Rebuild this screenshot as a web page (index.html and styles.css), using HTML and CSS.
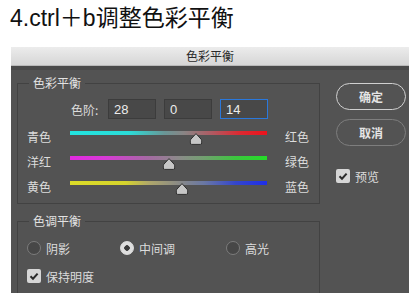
FILE: index.html
```html
<!DOCTYPE html>
<html lang="zh">
<head>
  <meta charset="UTF-8">
  <title>色彩平衡</title>
  <link rel="stylesheet" href="styles.css">
</head>
<body>
  <h1 class="heading">4.ctrl＋b调整色彩平衡</h1>

  <div class="dialog">
    <div class="titlebar">色彩平衡</div>
    <div class="dialog-body">
      <div class="main-col">
        <fieldset class="group">
          <legend>色彩平衡</legend>
          <div class="level-row">
            <span class="level-label">色阶:</span>
            <input class="num" type="text" value="28">
            <input class="num" type="text" value="0">
            <input class="num focused" type="text" value="14">
          </div>

          <div class="slider-row">
            <span class="side-left">青色</span>
            <div class="slider">
              <div class="track track-cr"></div>
              <svg class="thumb" style="left: 64%" width="13" height="12" viewBox="0 0 13 12"><path d="M6.5 0.6 L11.6 6.2 Q12.2 6.9 12.2 7.8 L12.2 10 Q12.2 11.4 10.8 11.4 L2.2 11.4 Q0.8 11.4 0.8 10 L0.8 7.8 Q0.8 6.9 1.4 6.2 Z"/></svg>
            </div>
            <span class="side-right">红色</span>
          </div>
          <div class="slider-row">
            <span class="side-left">洋红</span>
            <div class="slider">
              <div class="track track-mg"></div>
              <svg class="thumb" style="left: 50%" width="13" height="12" viewBox="0 0 13 12"><path d="M6.5 0.6 L11.6 6.2 Q12.2 6.9 12.2 7.8 L12.2 10 Q12.2 11.4 10.8 11.4 L2.2 11.4 Q0.8 11.4 0.8 10 L0.8 7.8 Q0.8 6.9 1.4 6.2 Z"/></svg>
            </div>
            <span class="side-right">绿色</span>
          </div>
          <div class="slider-row">
            <span class="side-left">黄色</span>
            <div class="slider">
              <div class="track track-yb"></div>
              <svg class="thumb" style="left: 57%" width="13" height="12" viewBox="0 0 13 12"><path d="M6.5 0.6 L11.6 6.2 Q12.2 6.9 12.2 7.8 L12.2 10 Q12.2 11.4 10.8 11.4 L2.2 11.4 Q0.8 11.4 0.8 10 L0.8 7.8 Q0.8 6.9 1.4 6.2 Z"/></svg>
            </div>
            <span class="side-right">蓝色</span>
          </div>
        </fieldset>

        <fieldset class="group tone">
          <legend>色调平衡</legend>
          <div class="radio-row">
            <label class="radio-item w1"><span class="radio"></span>阴影</label>
            <label class="radio-item w2"><span class="radio on"></span>中间调</label>
            <label class="radio-item"><span class="radio"></span>高光</label>
          </div>
          <label class="check-item">
            <span class="check"><svg width="14" height="14" viewBox="0 0 14 14"><path d="M3.5 7.2 L6 9.7 L10.6 4.6" fill="none" stroke="#2b2b2b" stroke-width="2"/></svg></span>保持明度
          </label>
        </fieldset>
      </div>

      <div class="side-col">
        <button class="btn primary">确定</button>
        <button class="btn">取消</button>
        <label class="check-item preview">
          <span class="check"><svg width="14" height="14" viewBox="0 0 14 14"><path d="M3.5 7.2 L6 9.7 L10.6 4.6" fill="none" stroke="#2b2b2b" stroke-width="2"/></svg></span>预览
        </label>
      </div>
    </div>
  </div>
</body>
</html>
```

FILE: styles.css
```css
body {
  margin: 0;
  background: #fff;
  font-family: "Liberation Sans", "Noto Sans CJK SC", sans-serif;
}
.heading {
  margin: 0;
  padding: 3px 0 0 10px;
  height: 44px;
  font-size: 23px;
  font-weight: normal;
  line-height: 30px;
  color: #111;
}
.dialog {
  margin-left: 11px;
  width: 398px;
  font-family: "Noto Sans CJK SC", sans-serif;
  font-size: 12px;
}
.titlebar {
  height: 18px;
  line-height: 18px;
  text-align: center;
  color: #2a2a2a;
  background: linear-gradient(#ececec, #d6d6d6);
  border-bottom: 1px solid #b9b9b9;
}
.dialog-body {
  display: flex;
  gap: 16px;
  background: #535353;
  border-top: 4px solid #4a4a4a;
  padding: 0 3px 20px 6px;
  color: #dcdcdc;
}
.main-col {
  width: 303px;
  padding-top: 5px;
}
.group {
  margin: 0;
  padding: 8px 0 0 9px;
  border: 1px solid #424242;
}
.group legend {
  margin-left: 2px;
  padding: 0 4px;
  line-height: 16px;
  color: #e2e2e2;
}
.tone {
  margin-top: 9px;
  padding-top: 10px;
}
.level-row {
  display: flex;
  align-items: center;
  gap: 8px;
  margin-left: 43px;
  height: 20px;
}
.level-label {
  width: 29px;
  padding-left: 1px;
}
.num {
  box-sizing: border-box;
  width: 48px;
  height: 20px;
  margin: 0;
  padding: 0 5px;
  background: #484848;
  border: 1px solid #3c3c3c;
  color: #ececec;
  font-family: "Liberation Sans", sans-serif;
  font-size: 13px;
  outline: none;
}
.num.focused {
  border-color: #2a78dc;
}
.slider-row {
  display: flex;
  align-items: flex-start;
  height: 25px;
}
.level-row + .slider-row {
  margin-top: 9px;
}
.side-left {
  width: 43px;
  margin-top: 2px;
  line-height: 14px;
}
.side-right {
  margin-left: 18px;
  margin-top: 2px;
  line-height: 14px;
}
.slider {
  position: relative;
  width: 197px;
  height: 25px;
}
.track {
  margin-top: 3px;
  height: 4px;
}
.track-cr {
  background: linear-gradient(to right, #22e4e0 0%, #2bdcd8 30%, #6a9696 48%, #8a8484 58%, #b05a62 72%, #dc2a32 86%, #ec121c 100%);
}
.track-mg {
  background: linear-gradient(to right, #e22ae0 0%, #d83ad6 18%, #a46aa2 40%, #8c8a8a 55%, #72a070 68%, #3cc63e 84%, #24dc28 100%);
}
.track-yb {
  background: linear-gradient(to right, #dcdc28 0%, #d6d42c 28%, #b0a86a 40%, #8a8a86 55%, #6a78a4 68%, #3446cc 84%, #1e2ee8 100%);
}
.thumb {
  position: absolute;
  top: 5px;
  transform: translateX(-50%);
  fill: #c6c6c6;
  stroke: #2e2e2e;
  stroke-width: 1;
}
.radio-row {
  display: flex;
  height: 18px;
  align-items: center;
}
.radio-item {
  display: flex;
  align-items: center;
  gap: 5px;
}
.w1 { width: 93px; }
.w2 { width: 106px; }
.radio {
  box-sizing: border-box;
  width: 14px;
  height: 14px;
  border-radius: 50%;
  background: #474747;
  border: 1px solid #7c7c7c;
}
.radio.on {
  background: radial-gradient(circle, #3a3a3a 0 2.5px, #dedede 3px);
  border-color: #dedede;
}
.check-item {
  display: flex;
  align-items: center;
  gap: 5px;
  height: 18px;
  margin-top: 10px;
  margin-bottom: 8px;
}
.check {
  width: 14px;
  height: 14px;
  border-radius: 2px;
  background: #d6d6d6;
}
.check svg {
  display: block;
}
.side-col {
  display: flex;
  flex-direction: column;
  padding-top: 13px;
}
.btn {
  width: 70px;
  height: 27px;
  margin: 0 0 9px;
  border-radius: 14px;
  background: transparent;
  border: 1px solid #7e7e7e;
  color: #e4e4e4;
  font-family: "Noto Sans CJK SC", sans-serif;
  font-size: 12px;
  font-weight: bold;
}
.btn.primary {
  border-color: #d0d0d0;
}
.preview {
  margin-top: 12px;
}
```
